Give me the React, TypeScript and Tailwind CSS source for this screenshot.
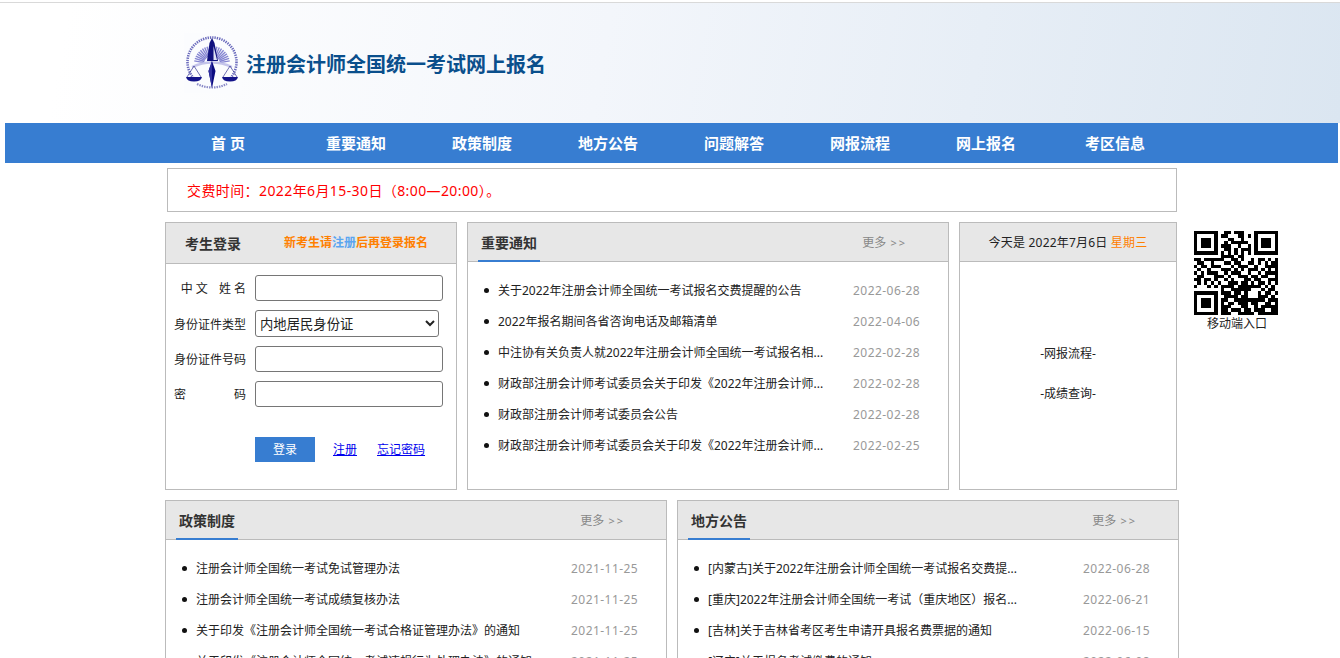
const navItems = [
  { label: '重要通知', cls: 'ml-[81px]' },
  { label: '政策制度', cls: 'ml-[66px]' },
  { label: '地方公告', cls: 'ml-[66px]' },
  { label: '问题解答', cls: 'ml-[66px]' },
  { label: '网报流程', cls: 'ml-[66px]' },
  { label: '网上报名', cls: 'ml-[66px]' },
  { label: '考区信息', cls: 'ml-[69px]' },
];

const noticeRows = [
  ['关于2022年注册会计师全国统一考试报名交费提醒的公告', '2022-06-28'],
  ['2022年报名期间各省咨询电话及邮箱清单', '2022-04-06'],
  ['中注协有关负责人就2022年注册会计师全国统一考试报名相...', '2022-02-28'],
  ['财政部注册会计师考试委员会关于印发《2022年注册会计师...', '2022-02-28'],
  ['财政部注册会计师考试委员会公告', '2022-02-28'],
  ['财政部注册会计师考试委员会关于印发《2022年注册会计师...', '2022-02-25'],
];

const policyRows = [
  ['注册会计师全国统一考试免试管理办法', '2021-11-25'],
  ['注册会计师全国统一考试成绩复核办法', '2021-11-25'],
  ['关于印发《注册会计师全国统一考试合格证管理办法》的通知', '2021-11-25'],
  ['关于印发《注册会计师全国统一考试违规行为处理办法》的通知', '2021-11-25'],
];

const localRows = [
  ['[内蒙古]关于2022年注册会计师全国统一考试报名交费提...', '2022-06-28'],
  ['[重庆]2022年注册会计师全国统一考试（重庆地区）报名...', '2022-06-21'],
  ['[吉林]关于吉林省考区考生申请开具报名费票据的通知', '2022-06-15'],
  ['[辽宁]关于报名考试缴费的通知', '2022-06-08'],
];

const qrRows = [
  '1111111001101110001111111',
  '1000001011000110101000001',
  '1011101000110010001011101',
  '1011101001011111001011101',
  '1011101011100100101011101',
  '1000001001101011101000001',
  '1111111010101010101111111',
  '0000000011110110000000000',
  '1101111110011010010110101',
  '0110010001101100110101011',
  '1011011100010111001001111',
  '0100100011101010111010101',
  '1010111001011100100101111',
  '0110001110100111011011001',
  '1101101001010001101100111',
  '0101010100111011010110101',
  '1000101011110111111101010',
  '0000000010011111100010110',
  '1111111011101101000101101',
  '1000001001111011000111010',
  '1011101011001111111110111',
  '1011101010110111011001101',
  '1011101011100011001011111',
  '1000001011011101101110011',
  '1111111011100111110111111',
];

function Logo() {
  const rays = [];
  for (let a = -170; a <= -10; a += 8) {
    const r = (a * Math.PI) / 180;
    rays.push(
      <line
        key={a}
        x1={28 + 8 * Math.cos(r)}
        y1={31 + 8 * Math.sin(r)}
        x2={28 + 18 * Math.cos(r)}
        y2={31 + 18 * Math.sin(r)}
        stroke="#8585d2"
        strokeWidth="1.4"
      />,
    );
  }
  return (
    <svg width="58" height="60" viewBox="0 0 58 60" className="bg-[#fbfcfe]">
      <circle cx="28" cy="29" r="24.5" fill="none" stroke="#6a6abc" strokeWidth="2.6" strokeDasharray="1.3 1" pathLength="150" />
      <rect x="11" y="46" width="34" height="12" fill="#fbfcfe" />
      <path d="M13 51 Q28 58 43 51" fill="none" stroke="#8a8ac8" strokeWidth="2.2" strokeDasharray="1.5 1" />
      {rays}
      <path d="M28 5 L30.5 10 L34 28 L23 28 L25.5 10 Z" fill="#10107e" />
      <path d="M29.5 13 L33 27 L29.5 27 Z" fill="#dfe2f4" />
      <path d="M8 34 Q28 25 48 34" fill="none" stroke="#c4c4ea" strokeWidth="2.4" />
      <path d="M28 28 L31.5 38 L28 55 L24.5 38 Z" fill="#0b0b80" />
      <path d="M28 28 L28 55 L24.5 38 Z" fill="#3030a0" />
      <path d="M10 33 L3 44 M10 33 L17 44 M46 33 L39 44 M46 33 L53 44" stroke="#33338f" strokeWidth="0.7" fill="none" />
      <path d="M2 44 L18 44 Q17 48.5 10 48.5 Q3 48.5 2 44 Z" fill="#14148a" />
      <path d="M38 44 L54 44 Q53 48.5 46 48.5 Q39 48.5 38 44 Z" fill="#14148a" />
    </svg>
  );
}

function QrCode() {
  return (
    <svg width="84" height="84" viewBox="0 0 25 25" shapeRendering="crispEdges">
      {qrRows.map((row, y) =>
        row.split('').map((c, x) => (c === '1' ? <rect key={`${x}-${y}`} x={x} y={y} width="1" height="1" fill="#000" /> : null)),
      )}
    </svg>
  );
}

function PanelHead({ title, more }: { title: string; more: string }) {
  return (
    <div className="relative h-[39px] shrink-0 flex items-center justify-between bg-[#e7e7e7] border-b border-[#bbbbbb]">
      <h3 className="ml-[13px] text-[14px] font-bold text-[#333333]">{title}</h3>
      <span className={`mt-[2px] text-[12px] text-[#888888] ${more}`}>
        更多 <span className="ml-[1px] text-[11px] tracking-[2px]">&gt;&gt;</span>
      </span>
      <div className="absolute left-[10px] -bottom-px h-[2px] w-[62px] bg-[#377dd1]" />
    </div>
  );
}

function NewsList({ rows, textWidth }: { rows: string[][]; textWidth: string }) {
  return (
    <ul className="flex flex-col pt-[13px] pl-[16px]">
      {rows.map(([text, date], i) => (
        <li key={i} className="h-[31px] flex items-center text-[12px] text-[#222222]">
          <span className="w-[5px] h-[5px] rounded-full bg-[#111111] mr-[9px] shrink-0" />
          <span className={`whitespace-nowrap ${textWidth}`}>{text}</span>
          <span className="text-[#999999] tracking-[0.45px] whitespace-nowrap">{date}</span>
        </li>
      ))}
    </ul>
  );
}

function Field({ label }: { label: React.ReactNode }) {
  return (
    <div className="flex items-center h-[26px]">
      <div className="w-[72px] pt-[2px] text-[12px] text-[#222222] mr-[9px]">{label}</div>
      <input type="text" className="w-[188px] h-[26px] bg-white border border-[#767676] rounded-[3px]" />
    </div>
  );
}

export default function App() {
  return (
    <div className="w-[1340px] h-[658px] overflow-hidden bg-white font-['Noto_Sans','Noto_Sans_CJK_SC',sans-serif]">
      <div className="pt-[2px]">
        <div className="h-px bg-[#d9d9d9]" />
      </div>
      <header className="h-[120px] pl-[184px] pt-[30px] flex items-start bg-[linear-gradient(100deg,#ffffff_5%,#f3f6fb_45%,#dbe6f1_100%)]">
        <Logo />
        <h1 className="ml-[5px] mt-[16px] -translate-x-px text-[20px] leading-[32px] font-bold text-[#0a4f8c]">注册会计师全国统一考试网上报名</h1>
      </header>

      <nav className="ml-[5px] w-[1333px] h-[40px] flex items-center pl-[206px] bg-[#377dd1] text-white text-[15px] font-bold">
        <a className="whitespace-pre">首 页</a>
        {navItems.map((n) => (
          <a key={n.label} className={n.cls}>{n.label}</a>
        ))}
      </nav>

      <div className="ml-[167px] mt-[5px] w-[1010px] h-[44px] flex items-center pl-[19px] border border-[#bbbbbb] text-[14px] tracking-[0.4px] text-[#ff0000]">
        交费时间：2022年6月15-30日（8:00—20:00）。
      </div>

      <div className="ml-[165px] mt-[10px] flex items-start">
        <section className="w-[292px] h-[268px] border border-[#bbbbbb]">
          <div className="h-[41px] flex items-center bg-[#e7e7e7] border-b border-[#bbbbbb]">
            <h3 className="ml-[19px] text-[14px] font-bold text-[#333333]">考生登录</h3>
            <p className="ml-[43px] text-[12px] font-bold text-[#ff8000]">
              新考生请<span className="text-[#5aa5f0]">注册</span>后再登录报名
            </p>
          </div>
          <form className="flex flex-col gap-[9px] pt-[11px] pl-[8px]">
            <Field label={<span className="block text-right whitespace-pre">中 文<span className="ml-[11px]">姓 名</span></span>} />
            <div className="flex items-center h-[27px]">
              <div className="w-[72px] pt-[2px] text-[12px] text-[#222222] mr-[9px]">身份证件类型</div>
              <select className="w-[184px] h-[27px] bg-white border border-[#767676] rounded-[3px] text-[13.33px] text-[#222222]">
                <option>内地居民身份证</option>
              </select>
            </div>
            <Field label="身份证件号码" />
            <Field label={<span className="flex justify-between"><span>密</span><span>码</span></span>} />
            <div className="flex items-center mt-[21px] ml-[81px] text-[12px]">
              <button type="button" className="w-[60px] h-[25px] bg-[#377dd1] text-white">登录</button>
              <a className="ml-[18px] text-[#0000ee] underline">注册</a>
              <a className="ml-[20px] text-[#0000ee] underline">忘记密码</a>
            </div>
          </form>
        </section>

        <section className="ml-[10px] w-[482px] h-[268px] border border-[#bbbbbb]">
          <PanelHead title="重要通知" more="mr-[41px]" />
          <NewsList rows={noticeRows} textWidth="w-[355px]" />
        </section>

        <section className="ml-[10px] w-[218px] h-[268px] border border-[#bbbbbb] flex flex-col items-center text-[12px] text-[#222222]">
          <div className="w-full h-[39px] shrink-0 pt-[2px] flex items-center justify-center bg-[#e7e7e7] border-b border-[#bbbbbb] tracking-[0.2px]">
            今天是 2022年7月6日&nbsp;<span className="text-[#ff8000]">星期三</span>
          </div>
          <p className="mt-[83px]">-网报流程-</p>
          <p className="mt-[22px]">-成绩查询-</p>
        </section>

        <aside className="ml-[17px] mt-[9px] w-[84px] flex flex-col items-center text-[12px] text-[#222222]">
          <QrCode />
          <span className="ml-[2px]">移动端入口</span>
        </aside>
      </div>

      <div className="ml-[165px] mt-[10px] flex gap-[10px]">
        <section className="w-[502px] h-[300px] border border-[#bbbbbb]">
          <PanelHead title="政策制度" more="mr-[41px]" />
          <NewsList rows={policyRows} textWidth="w-[375px]" />
        </section>
        <section className="w-[502px] h-[300px] border border-[#bbbbbb]">
          <PanelHead title="地方公告" more="mr-[41px]" />
          <NewsList rows={localRows} textWidth="w-[375px]" />
        </section>
      </div>
    </div>
  );
}
